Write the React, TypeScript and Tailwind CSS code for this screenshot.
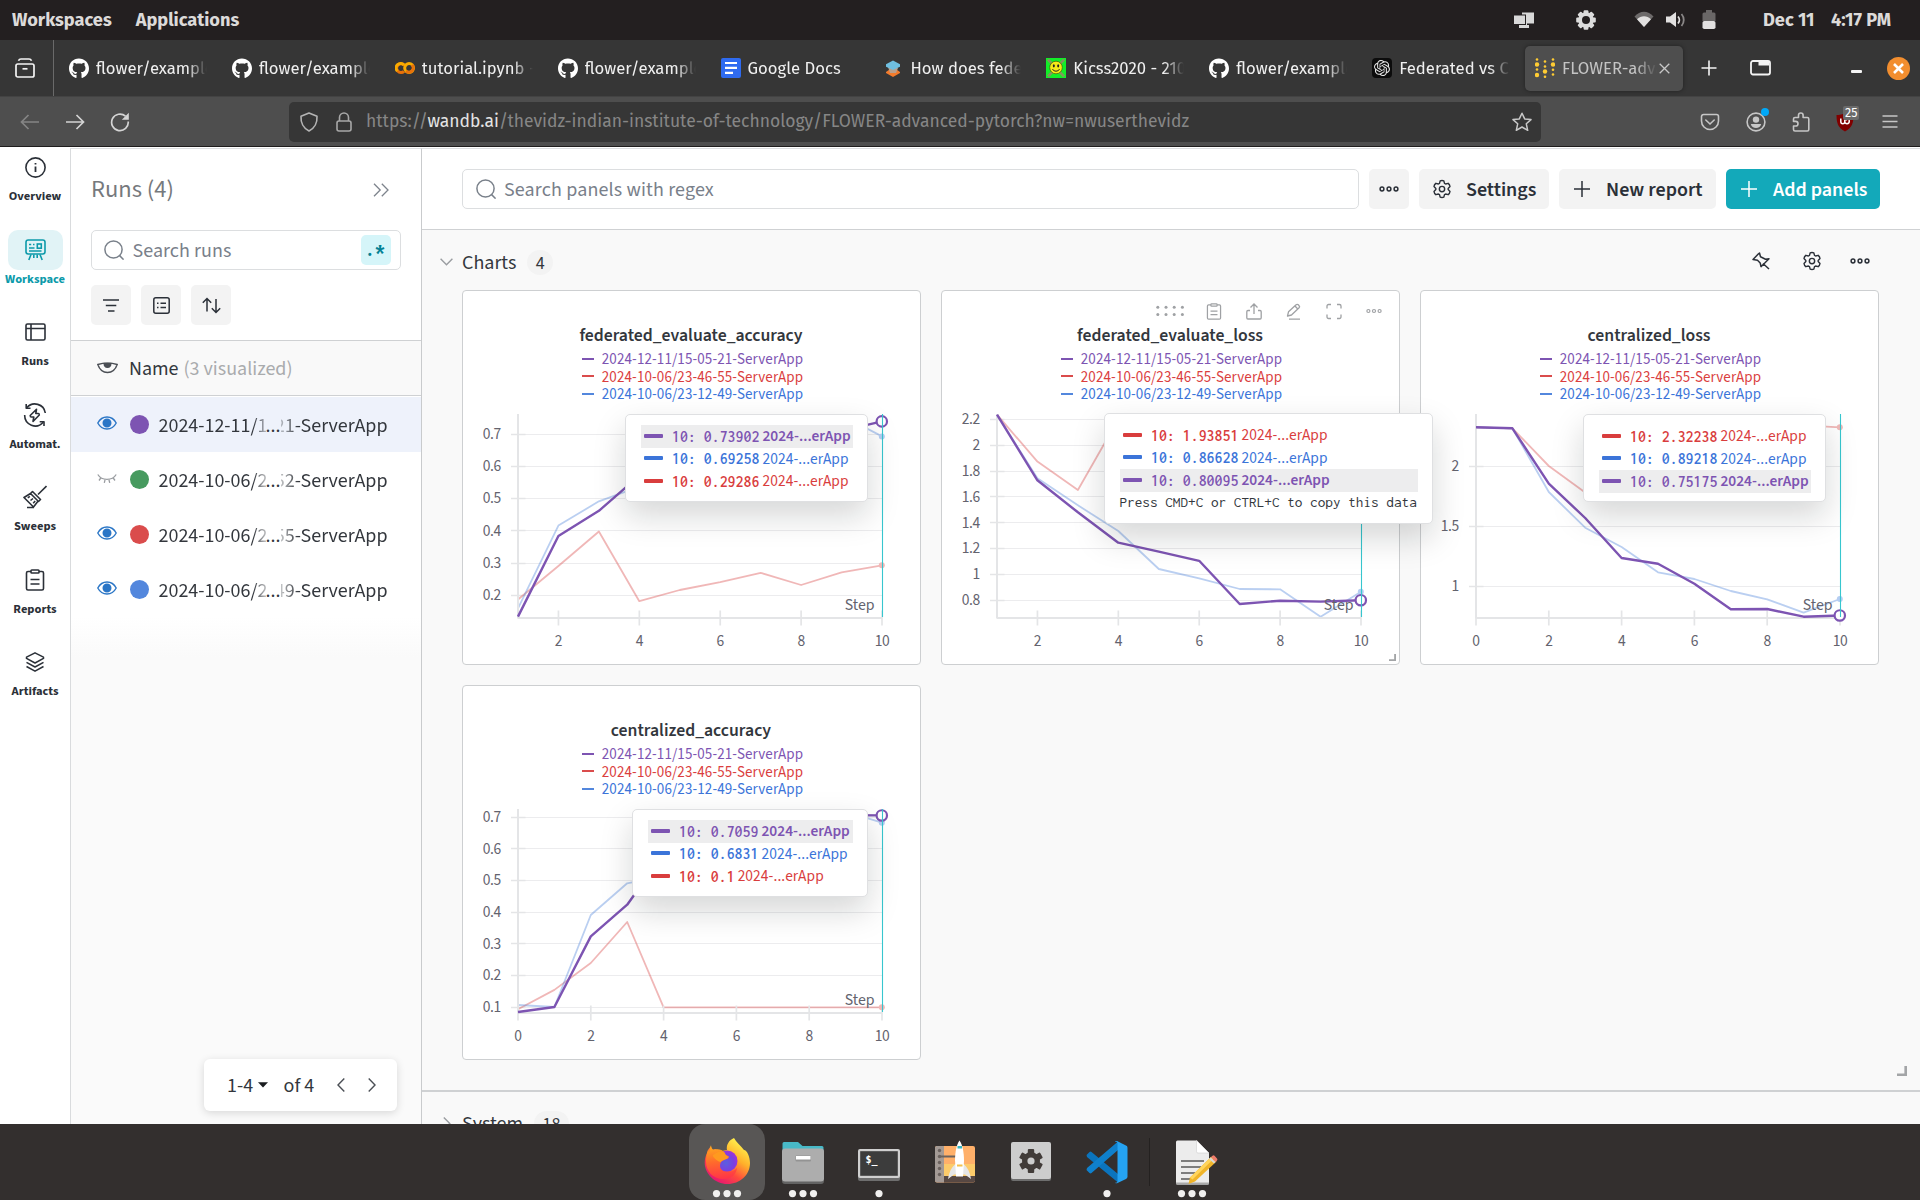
import React from "react";
import { FaGithub } from "react-icons/fa";
import { SiOpenai } from "react-icons/si";

const PURPLE = "#7d54b2";
const RED = "#da4c4c";
const BLUE = "#5387dd";

type IconProps = { className?: string };

/* ---------- Desktop top bar ---------- */

function TopBar() {
  return (
    <div className="flex h-10 shrink-0 items-center bg-[#231f20] px-3 text-[18.200px] font-bold text-[#dcdad9] [font-family:'Fira_Sans','Noto_Sans_CJK_SC',sans-serif]">
      <span className="pt-[2px]">Workspaces</span>
      <span className="ml-[24px] pt-[2px]">Applications</span>
      <div className="ml-auto flex items-center pr-[14px]">
        <svg className="h-5 w-5" viewBox="0 0 20 20" fill="none">
          <path d="M8 2.500h12v11H8z" fill="#d8d8d8" />
          <path d="M5 8h8v9.500H5z" fill="#d8d8d8" />
          <path d="M-1 4.500h13v10.500H-1z" fill="#231f20" />
          <path d="M0 5.500h11v8.500H0z" fill="#d8d8d8" />
          <path d="M5 15h10v3H5z" fill="#d8d8d8" />
        </svg>
        <svg className="ml-[42px] h-5 w-5" viewBox="-10 -10 20 20">
          <g fill="#dcdcdc">
            {[0, 45, 90, 135].map((a) => (
              <rect key={a} x="-2.400" y="-9.800" width="4.800" height="19.600" rx="1" transform={`rotate(${a})`} />
            ))}
            <circle r="7.800" />
          </g>
          <circle r="4" fill="#231f20" />
        </svg>
        <svg className="ml-[38px] h-5 w-5" viewBox="0 0 20 20">
          <path d="M.5 6.500C6 .2 14 .2 19.500 6.500L10 17z" fill="#6d6a6a" />
          <path d="M3 9.300C7 5.200 13 5.200 17 9.300L10 17z" fill="#e2e0e0" />
        </svg>
        <svg className="ml-[12px] h-5 w-5" viewBox="0 0 20 20" fill="none">
          <path d="M0 6.500h4L10 2v15l-6-4.500H0z" fill="#e2e0e0" />
          <path d="M12 6.500c1.800 2 1.800 5 0 7" stroke="#e2e0e0" strokeWidth="1.800" />
          <path d="M15.500 4c3 3.500 3 8.500 0 12" stroke="#8a8787" strokeWidth="1.800" />
        </svg>
        <svg className="ml-[13px] h-5 w-5" viewBox="0 0 20 20">
          <path d="M7 0h6v2.500h2a1.500 1.500 0 0 1 1.500 1.500v7h-13V4A1.500 1.500 0 0 1 5 2.500h2z" fill="#6a6767" />
          <rect x="3.500" y="11" width="13" height="8" rx="1.800" fill="#e2e0e0" />
        </svg>
        <span className="ml-[44px] w-[54px] pt-[2px] whitespace-nowrap">Dec 11</span>
        <span className="ml-[14px] w-[63px] pt-[2px] whitespace-nowrap">4:17 PM</span>
      </div>
    </div>
  );
}

/* ---------- Browser tabs ---------- */

const colabIcon = (
  <svg className="h-5 w-5" viewBox="0 0 20 20" fill="none" strokeWidth="3">
    <path d="M9.400 7.300A4.400 4.400 0 1 0 9 13.300" stroke="#e8710a" />
    <path d="M2.300 13A4.400 4.400 0 0 1 9 6.900" stroke="#f9ab00" />
    <circle cx="14.100" cy="10" r="4.400" stroke="#f9ab00" />
    <path d="M11 13.100a4.400 4.400 0 0 0 6.200-6.200" stroke="#e8710a" />
  </svg>
);

const docsIcon = (
  <svg className="h-5 w-5" viewBox="0 0 20 20">
    <rect width="20" height="20" rx="2" fill="#2f6bf0" />
    <path d="M4 5h12M4 9.800h12M4 14.800h8" stroke="#fff" strokeWidth="2.200" />
  </svg>
);

const stackIcon = (
  <svg className="h-5 w-5" viewBox="0 0 20 20">
    <path d="M3 14l7-5 7 5v1l-7 4-7-4z" fill="#f37b2c" />
    <path d="M5 9l10 1-2 5H7z" fill="#b9a08c" />
    <path d="M10 2.500l7 3.700v2.600L10 12 3 8.800V6.200z" fill="#6fbfe0" />
  </svg>
);

const skullIcon = (
  <svg className="h-5 w-5" viewBox="0 0 20 20">
    <rect width="20" height="20" fill="#12ee28" />
    <path d="M2 1.500l16 17M18 1.500l-16 17" stroke="#7f9a5a" strokeWidth="2.600" />
    <circle cx="10" cy="9.500" r="6.300" fill="#f4ea18" stroke="#3c3a05" strokeWidth=".6" />
    <ellipse cx="7.800" cy="7.800" rx="1" ry="1.600" fill="#222" />
    <ellipse cx="12.200" cy="7.800" rx="1" ry="1.600" fill="#222" />
    <path d="M6.500 11.200c1.500 2.600 5.500 2.600 7 0" stroke="#222" strokeWidth="1" fill="none" />
  </svg>
);

const wandbIcon = (
  <svg className="h-5 w-5" viewBox="0 0 20 20" fill="#ffcc33">
    <circle cx="2" cy="1.500" r="1.300" />
    <circle cx="2" cy="6.500" r="2.200" />
    <circle cx="2" cy="11.500" r="1.300" />
    <circle cx="2" cy="17" r="2.200" />
    <circle cx="10" cy="3.500" r="1.300" />
    <circle cx="10" cy="8.500" r="1.300" />
    <circle cx="10" cy="13.500" r="2.200" />
    <circle cx="10" cy="18.700" r="1.300" />
    <circle cx="18" cy="1.500" r="1.300" />
    <circle cx="18" cy="6.500" r="2.200" />
    <circle cx="18" cy="11.700" r="1.300" />
    <circle cx="18" cy="16.500" r="1.300" />
  </svg>
);

const githubIcon = <FaGithub className="h-[21px] w-5 text-white" />;

const tabs = [
  { icon: githubIcon, title: "flower/examples" },
  { icon: githubIcon, title: "flower/examples" },
  { icon: colabIcon, title: "tutorial.ipynb - Colab" },
  { icon: githubIcon, title: "flower/examples" },
  { icon: docsIcon, title: "Google Docs" },
  { icon: stackIcon, title: "How does federated" },
  { icon: skullIcon, title: "Kicss2020 - 2106" },
  { icon: githubIcon, title: "flower/examples" },
  {
    icon: (
      <span className="flex h-5 w-5 items-center justify-center rounded-[4px] bg-[#0c0c0c]">
        <SiOpenai className="h-4 w-4 text-[#e8e8e8]" />
      </span>
    ),
    title: "Federated vs Ce",
  },
];

function TabBar() {
  return (
    <div className="flex h-14 shrink-0 items-center bg-[#363636] text-[16.700px] text-[#f0f0f0] [font-family:'Fira_Sans','Noto_Sans_CJK_SC',sans-serif]">
      <div className="flex h-full w-[54px] items-center border-r border-[#6a6a6a] pl-[15px]">
        <svg className="h-5 w-5" viewBox="0 0 20 20" fill="none" stroke="#f4f4f4" strokeWidth="1.700">
          <rect x="1" y="6" width="18" height="13" rx="1.800" />
          <path d="M3.500 2.800C4 1.500 5 1 6 1h8c1 0 2 .5 2.500 1.800" />
          <path d="M7.500 10.800h5" />
        </svg>
      </div>
      <div className="ml-[5px] flex h-[45px] gap-[4.900px]">
        {tabs.map((t, i) => (
          <div key={i} className="flex w-[158px] items-center px-[10px]">
            <span className="shrink-0">{t.icon}</span>
            <span className="ml-[7px] flex-1 overflow-hidden pt-[2px] whitespace-nowrap [mask-image:linear-gradient(to_right,black_82%,transparent_100%)]">
              {t.title}
            </span>
          </div>
        ))}
        <div className="flex w-[158px] items-center rounded-[5px] bg-[#4e4e4e] pr-[13px] pl-[10px] text-[#c4c4c4] shadow-[0_0_4px_rgba(0,0,0,0.4)]">
          <span className="shrink-0">{wandbIcon}</span>
          <span className="ml-[7px] w-[95px] overflow-hidden pt-[2px] whitespace-nowrap [mask-image:linear-gradient(to_right,black_78%,transparent_100%)]">
            FLOWER-advanced
          </span>
          <svg className="ml-auto h-[11px] w-[11px] shrink-0" viewBox="0 0 11 11" stroke="#c8c8c8" strokeWidth="1.300">
            <path d="M.7.7l9.600 9.600M10.300.7L.7 10.300" />
          </svg>
        </div>
      </div>
      <svg className="ml-[18px] h-4 w-4" viewBox="0 0 16 16" stroke="#f4f4f4" strokeWidth="1.600">
        <path d="M8 .5v15M.5 8h15" />
      </svg>
      <svg className="ml-[33px] h-5 w-[21px]" viewBox="0 0 21 20" fill="none">
        <rect x="1" y="3" width="19" height="13.500" rx="2" stroke="#f4f4f4" strokeWidth="1.800" />
        <path d="M8.500 3H19v4.500H8.500z" fill="#f4f4f4" />
      </svg>
      <div className="ml-[80px] mt-[7px] h-[3px] w-[11px] rounded-[1px] bg-[#f4f4f4]" />
      <div className="ml-[25px] flex h-[23px] w-[23px] items-center justify-center rounded-full bg-[#f28e2f]">
        <svg className="h-[11px] w-[11px]" viewBox="0 0 11 11" stroke="#fff" strokeWidth="2.600">
          <path d="M1 1l9 9M10 1l-9 9" />
        </svg>
      </div>
    </div>
  );
}

/* ---------- Browser address bar ---------- */

function NavBar() {
  return (
    <div className="flex h-[51px] shrink-0 items-center border-t border-b border-t-[#434343] border-b-[#1f1d1d] bg-[#4e4e4e] text-[17.500px] [font-family:'Fira_Sans','Noto_Sans_CJK_SC',sans-serif]">
      <svg className="ml-5 h-5 w-5" viewBox="0 0 20 20" fill="none" stroke="#858585" strokeWidth="1.700">
        <path d="M19 10H1.500M8.500 3l-7 7 7 7" />
      </svg>
      <svg className="ml-[25px] h-5 w-5" viewBox="0 0 20 20" fill="none" stroke="#d4d4d4" strokeWidth="1.700">
        <path d="M1 10h17.500M11.500 3l7 7-7 7" />
      </svg>
      <svg className="ml-[25px] h-5 w-5" viewBox="0 0 20 20" fill="none" stroke="#d4d4d4" strokeWidth="1.700">
        <path d="M18.200 9.500A8.300 8.300 0 1 1 15.500 4.200" />
        <path d="M18.800.8v7h-7z" fill="#d4d4d4" stroke="none" />
      </svg>
      <div className="ml-[159px] flex h-10 w-[1252px] items-center rounded-[5px] bg-[#363636]">
        <svg className="ml-[10px] h-5 w-5" viewBox="0 0 20 20" fill="none" stroke="#b4b4b4" strokeWidth="1.600" strokeLinejoin="round">
          <path d="M10 1l8 3.300c.4 6-2.300 12-8 14.700C4.300 16.300 1.600 10.300 2 4.300z" />
        </svg>
        <svg className="ml-[15px] h-5 w-5" viewBox="0 0 20 20" fill="none" stroke="#a8a8a8" strokeWidth="1.600">
          <rect x="3" y="9" width="14" height="10" rx="2" />
          <path d="M5.500 9V5.500a4.500 4.500 0 0 1 9 0V9" />
        </svg>
        <span className="ml-3 pt-[2px] whitespace-nowrap text-[#868686]">
          https://<span className="text-[#e4e4e4]">wandb.ai</span>
          /thevidz-indian-institute-of-technology/FLOWER-advanced-pytorch?nw=nwuserthevidz
        </span>
        <svg className="mr-[9px] ml-auto h-5 w-5" viewBox="0 0 20 20" fill="none" stroke="#c9c9c9" strokeWidth="1.500" strokeLinejoin="round">
          <path d="M10 1.200l2.700 5.700 6.300.7-4.700 4.200 1.400 6.500-5.700-3.300-5.700 3.300 1.400-6.500L1 7.600l6.300-.7z" />
        </svg>
      </div>
      <svg className="ml-[159px] h-5 w-5" viewBox="0 0 20 20" fill="none" stroke="#c6c6c6" strokeWidth="1.600">
        <path d="M1.500 4.500a2 2 0 0 1 2-2h13a2 2 0 0 1 2 2V9a8.500 8.500 0 0 1-17 0z" />
        <path d="M5.800 8l4.200 4 4.200-4" strokeLinecap="round" />
      </svg>
      <div className="relative ml-[26px] h-5 w-5">
        <svg className="h-5 w-5" viewBox="0 0 20 20" fill="#c6c6c6">
          <circle cx="10" cy="10" r="8.900" fill="none" stroke="#c6c6c6" strokeWidth="1.600" />
          <circle cx="10" cy="7.600" r="3.200" />
          <path d="M4.800 12h10.400c-.5 2.600-2.600 4-5.200 4s-4.700-1.400-5.200-4z" />
        </svg>
        <span className="absolute -top-[4px] left-[15px] h-2 w-2 rounded-full bg-[#00a8f8]" />
      </div>
      <svg className="ml-[25px] h-5 w-5" viewBox="0 0 20 20" fill="none" stroke="#c6c6c6" strokeWidth="1.600" strokeLinejoin="round">
        <path d="M2.500 7a1.500 1.500 0 0 1 1.500-1.500h3.500V3.300a2.300 2.300 0 0 1 4.600 0v2.200h4.200a1.500 1.500 0 0 1 1.500 1.500v10.500a1.500 1.500 0 0 1-1.500 1.500H4a1.500 1.500 0 0 1-1.500-1.500V14h2.200a2.300 2.300 0 0 0 0-4.600H2.500z" />
      </svg>
      <div className="relative ml-[24px] h-5 w-5">
        <svg className="h-5 w-5" viewBox="0 0 20 20">
          <path d="M10 1c2.500 1.500 5.500 2 8.500 2 0 8-1.500 13-8.500 16.500C3 16 1.500 11 1.500 3c3 0 6-.5 8.500-2z" fill="#800000" />
          <path d="M5.800 6.500v3c0 3 4 3 4 0v-2m0 2c0 3 4.500 3 4.500-.5 0-2.500-3-2.500-3-.5" stroke="#fff" strokeWidth="1.500" fill="none" />
        </svg>
        <span className="absolute -top-[6px] left-[8px] rounded-[2px] bg-[#6b6b6b] px-[2px] text-[12.500px] leading-[14px] text-white">25</span>
      </div>
      <svg className="ml-[25px] h-5 w-5" viewBox="0 0 20 20" stroke="#c6c6c6" strokeWidth="1.600">
        <path d="M2.500 4h15M2.500 9.500h15M2.500 15h15" />
      </svg>
    </div>
  );
}

/* ---------- Shared icons ---------- */

function GearIcon({ className }: IconProps) {
  return (
    <svg className={className} viewBox="0 0 24 24" fill="none" stroke="currentColor" strokeWidth="1.700" strokeLinejoin="round">
      <circle cx="12" cy="12" r="3.200" />
      <path d="M9.800 2.200Q12 1.200 14.200 2.200L15 5.300L16.300 6L19.400 5.200Q21.300 6.600 21.600 9L19.400 11.300V12.700L21.600 15Q21.300 17.400 19.400 18.800L16.300 18L15 18.700L14.200 21.800Q12 22.800 9.800 21.800L9 18.700L7.700 18L4.600 18.800Q2.700 17.400 2.400 15L4.600 12.700V11.300L2.400 9Q2.700 6.600 4.600 5.200L7.700 6L9 5.300Z" />
    </svg>
  );
}

function DotsIcon({ className }: IconProps) {
  return (
    <svg className={className} viewBox="0 0 20 20" fill="none" stroke="currentColor" strokeWidth="1.500">
      <circle cx="3" cy="10" r="1.900" />
      <circle cx="10" cy="10" r="1.900" />
      <circle cx="17" cy="10" r="1.900" />
    </svg>
  );
}

function SearchIcon({ className }: IconProps) {
  return (
    <svg className={className} viewBox="0 0 20 20" fill="none" stroke="currentColor" strokeWidth="1.500">
      <circle cx="9.500" cy="9.500" r="8.600" />
      <path d="M15.600 15.600l4 4" />
    </svg>
  );
}

function PlusIcon({ className }: IconProps) {
  return (
    <svg className={className} viewBox="0 0 16 16" stroke="currentColor" strokeWidth="1.500">
      <path d="M8 0v16M0 8h16" />
    </svg>
  );
}

function ClipboardIcon({ className }: IconProps) {
  return (
    <svg className={className} viewBox="0 0 20 22" fill="none" stroke="currentColor" strokeWidth="1.600">
      <path d="M6 2.500H3A1.500 1.500 0 0 0 1.500 4v15.500A1.500 1.500 0 0 0 3 21h14a1.500 1.500 0 0 0 1.500-1.500V4A1.500 1.500 0 0 0 17 2.500h-3" />
      <rect x="6" y="1" width="8" height="3" rx=".8" />
      <path d="M5.500 10.500h9M5.500 15h9" />
    </svg>
  );
}

/* ---------- Left rail ---------- */

const rail: { label: string; active?: boolean; icon: React.ReactNode }[] = [
  {
    label: "Overview",
    icon: (
      <svg className="h-[21px] w-[21px]" viewBox="0 0 21 21" fill="none" stroke="currentColor" strokeWidth="1.600">
        <circle cx="10.500" cy="10.500" r="9.600" />
        <path d="M10.500 9.500v5.500M10.500 5.900v1.700" strokeWidth="1.800" />
      </svg>
    ),
  },
  {
    label: "Workspace",
    active: true,
    icon: (
      <svg className="h-[22px] w-[21px]" viewBox="0 0 21 22" fill="none" stroke="currentColor" strokeWidth="1.600">
        <rect x="1" y="1" width="19" height="14" rx="2.200" />
        <rect x="12.300" y="5" width="4" height="4.200" />
        <path d="M4 5.500h2.200M4 9h5.500M4 12h12.500M8 5.500h1.500" strokeWidth="1.300" />
        <path d="M6 15.500L3.800 21M15 15.500l2.200 5.500M8.800 15.500V19M12.200 15.500V19" />
      </svg>
    ),
  },
  {
    label: "Runs",
    icon: (
      <svg className="h-[18px] w-[21px]" viewBox="0 0 21 18" fill="none" stroke="currentColor" strokeWidth="1.600">
        <rect x="1" y="1" width="19" height="16" rx="1.500" />
        <path d="M1 5.500h19M6 1v16" />
      </svg>
    ),
  },
  {
    label: "Automat.",
    icon: (
      <svg className="h-[24px] w-[24px]" viewBox="0 0 24 24" fill="none" stroke="currentColor" strokeWidth="1.600" strokeLinejoin="round">
        <path d="M3.800 4.800A10.500 10.500 0 0 1 22.300 10M1.700 12a10.500 10.500 0 0 0 18.500 7.200" />
        <path d="M3.200 1v4.300h4.300M21 23v-4.300h-4.300" />
        <path d="M13.500 6.300L7.200 12.500c0 1 .3 1.500 1 1.500h2.600l-.8 4.500 6.300-6.500c0-1-.4-1.500-1-1.500h-2.500z" />
      </svg>
    ),
  },
  {
    label: "Sweeps",
    icon: (
      <svg className="h-[24px] w-[24px]" viewBox="0 0 24 24" fill="none" stroke="currentColor" strokeWidth="1.600" strokeLinejoin="round">
        <path d="M23.500 1L15 9.500" />
        <path d="M9.500 6.500l8 8-2 2-8-8zM7.500 8.500L1 12.500l9.500 9.500 5-6.500M4.800 12.800l2-1.500M7.500 15.500l2.500-2M10.200 18.200l2-2.200M4 22.500h7" />
      </svg>
    ),
  },
  { label: "Reports", icon: <ClipboardIcon className="h-[22px] w-5" /> },
  {
    label: "Artifacts",
    icon: (
      <svg className="h-5 w-5" viewBox="0 0 20 20" fill="none" stroke="currentColor" strokeWidth="1.500" strokeLinejoin="round">
        <path d="M10 .8l8.500 4.400v1.200L10 11 1.500 6.400V5.200z" />
        <path d="M1.500 10.300L10 15l8.500-4.700M1.500 14.500L10 19.200l8.500-4.700" />
      </svg>
    ),
  },
];

function Rail() {
  return (
    <nav className="-mt-px flex w-[70px] shrink-0 flex-col items-center">
      {rail.map((r) => (
        <div key={r.label} className={"flex h-[82.500px] shrink-0 flex-col items-center " + (r.active ? "text-[#0c9aaa]" : "text-[#2b3038]")}>
          <span className={"flex h-10 w-[55px] items-center justify-center rounded-[10px] " + (r.active ? "bg-[#e1f3f6]" : "")}>
            {r.icon}
          </span>
          <span className="text-[12.500px] leading-[18px] font-bold">{r.label}</span>
        </div>
      ))}
    </nav>
  );
}

/* ---------- Runs panel ---------- */

function OpenEye() {
  return (
    <svg className="mb-[3px] h-4 w-5 shrink-0" viewBox="0 0 20 16" fill="none" stroke="#2b76c6" strokeWidth="1.400">
      <path d="M.8 8C5 0 15 0 19.200 8 15 16 5 16 .8 8z" />
      <circle cx="10" cy="8" r="3.800" fill="#2b76c6" stroke="#2b76c6" />
    </svg>
  );
}

function ClosedEye() {
  return (
    <svg className="mb-[3px] h-4 w-5 shrink-0" viewBox="0 0 20 16" fill="none" stroke="#9a9da1" strokeWidth="1.300">
      <path d="M.8 4.500c4 6.500 14.400 6.500 18.400 0M3.800 8L2 10.500M8 9.800l-.7 3M12 9.800l.7 3M16.200 8l1.800 2.500" />
    </svg>
  );
}

const runs = [
  { head: "2024-12-11/1", tail: "21-ServerApp", color: "bg-[#7d54b2]", visible: true, active: true },
  { head: "2024-10-06/2", tail: "52-ServerApp", color: "bg-[#479a5f]", visible: false },
  { head: "2024-10-06/2", tail: "55-ServerApp", color: "bg-[#da4c4c]", visible: true },
  { head: "2024-10-06/2", tail: "49-ServerApp", color: "bg-[#5387dd]", visible: true },
];

function RunsPanel() {
  return (
    <aside className="relative flex w-[352px] shrink-0 flex-col border-t border-r border-l border-t-[#dcdee0] border-r-[#c9cbcd] border-l-[#d9dbdd] bg-[#fafafa]">
      <div className="bg-white px-5 pb-[15px]">
        <div className="flex h-[81px] items-center justify-between pr-[12px]">
          <span className="pt-[2px] text-[24.500px] text-[#76797d]">Runs (4)</span>
          <svg className="h-[14px] w-4" viewBox="0 0 16 14" fill="none" stroke="#7d838c" strokeWidth="1.300">
            <path d="M1 .8L7.200 7 1 13.200M8.800.8L15 7l-6.200 6.200" />
          </svg>
        </div>
        <div className="flex h-10 w-[310px] items-center rounded-[5px] border border-[#dcdee0] pr-[9px] pl-[12px] text-[#79808a]">
          <SearchIcon className="h-5 w-5" />
          <span className="ml-[8.500px] pt-[2px] text-[20px] tracking-[0.050px]">Search runs</span>
          <span className="ml-auto flex h-[30px] w-[30px] items-center justify-center rounded-[5px] bg-[#d5f5f9] pr-[2px] text-[20px] font-bold text-[#038194] [font-family:'Inconsolata','Liberation_Mono',monospace]">
            .*
          </span>
        </div>
        <div className="mt-[15px] flex gap-[10px] text-[#2b3038]">
          <span className="flex h-10 w-10 items-center justify-center rounded-[5px] bg-[#f3f3f3]">
            <svg className="h-4 w-4" viewBox="0 0 16 16" stroke="currentColor" strokeWidth="1.500">
              <path d="M0 3h16M2.800 8.500h10.500M5 14h6.500" />
            </svg>
          </span>
          <span className="flex h-10 w-10 items-center justify-center rounded-[5px] bg-[#f3f3f3]">
            <svg className="h-[17px] w-[17px]" viewBox="0 0 17 17" fill="none" stroke="currentColor" strokeWidth="1.500">
              <rect x=".8" y=".8" width="15.400" height="15.400" rx="2" />
              <path d="M4 6.200h1.500M7.500 6.200H13M4 10.600h1.500M7.500 10.600H13" />
            </svg>
          </span>
          <span className="flex h-10 w-10 items-center justify-center rounded-[5px] bg-[#f3f3f3]">
            <svg className="h-[17px] w-[19px]" viewBox="0 0 19 17" fill="none" stroke="currentColor" strokeWidth="1.500">
              <path d="M5 14.500V1.500M.8 5.800L5 1.500l4.200 4.300M14 2v13.500M9.800 11.200l4.200 4.300 4.200-4.300" />
            </svg>
          </span>
        </div>
      </div>
      <div className="flex h-[56px] items-center border-t border-b border-[#cfd1d3] bg-[#f9f9f9] pl-[26px] text-[20px]">
        <svg className="h-3 w-[21px]" viewBox="0 0 21 12" fill="none" stroke="#4b4f55" strokeWidth="1.400">
          <path d="M.8 2.500Q10.500-.3 20.200 2.500Q17.500 10.500 10.500 10.500T.8 2.500z" />
          <path d="M7.200 1.500h6.600c0 5-6.600 5-6.600 0z" fill="#4b4f55" />
        </svg>
        <span className="ml-[11px] pt-[2px] text-[#33373d]">Name</span>
        <span className="ml-[5px] pt-[2px] text-[#a9abad]">(3 visualized)</span>
      </div>
      <div className="bg-white pt-[1px]">
        {runs.map((r) => (
          <div key={r.tail} className={"flex h-[55px] items-center pl-[26px] text-[20px] text-[#33373d] " + (r.active ? "bg-[#eef2fb]" : "")}>
            {r.visible ? <OpenEye /> : <ClosedEye />}
            <span className={"ml-[12.500px] h-[19.500px] w-[19.500px] rounded-full " + r.color} />
            <div className="ml-[9.500px] flex w-[229px] pt-[2px] whitespace-nowrap">
              <span className="w-[107px] overflow-hidden [mask-image:linear-gradient(to_right,black_88%,rgba(0,0,0,0.3)_100%)]">{r.head}</span>
              <span className="w-[15px]">...</span>
              <span className="flex w-[107px] justify-end overflow-hidden [mask-image:linear-gradient(to_right,rgba(0,0,0,0.3)_0%,black_16%)]">
                <span>{r.tail}</span>
              </span>
            </div>
          </div>
        ))}
      </div>
      <div className="h-[40px] shrink-0 bg-gradient-to-b from-white to-[#fafafa]" />
      <div className="absolute right-[24px] bottom-[13px] flex h-[52px] w-[193px] items-center rounded-[6px] bg-white pl-[23px] text-[20px] text-[#33373d] shadow-[0_2px_8px_rgba(0,0,0,0.14)]">
        <span className="pt-[2px]">1-4</span>
        <svg className="ml-[5px] h-[6px] w-[10px]" viewBox="0 0 10 6" fill="#1a1c1f">
          <path d="M0 .3h10L5 5.500z" />
        </svg>
        <span className="ml-[15.500px] pt-[2px]">of 4</span>
        <svg className="ml-[22.500px] h-[14px] w-2" viewBox="0 0 8 14" fill="none" stroke="#4b4f55" strokeWidth="1.400">
          <path d="M7.300.6L1 7l6.300 6.400" />
        </svg>
        <svg className="ml-[23px] h-[14px] w-2" viewBox="0 0 8 14" fill="none" stroke="#4b4f55" strokeWidth="1.400">
          <path d="M.7.6L7 7 .7 13.400" />
        </svg>
      </div>
    </aside>
  );
}

/* ---------- Charts ---------- */

type Series = [number, number][];
type TipRow = { c: "p" | "r" | "b"; text: string; on?: boolean };
type Chart = {
  title: string;
  xMin: number;
  yTicks: string[];
  yRef: [number, number];
  perUnit: number;
  purple: Series;
  blue: Series;
  red: Series;
  rows: TipRow[];
  tipClass: string;
  note?: boolean;
  hovered?: boolean;
};

const from = (start: number, ys: number[]): Series => ys.map((y, i) => [start + i, y]);

const charts: Chart[] = [
  {
    title: "federated_evaluate_accuracy",
    xMin: 1,
    yTicks: ["0.7", "0.6", "0.5", "0.4", "0.3", "0.2"],
    yRef: [0.7, 144],
    perUnit: 322.7,
    purple: from(1, [0.134, 0.384, 0.462, 0.571, 0.61, 0.64, 0.67, 0.69, 0.71, 0.739]),
    blue: from(1, [0.16, 0.416, 0.4915, 0.537, 0.58, 0.62, 0.65, 0.69, 0.758, 0.6926]),
    red: from(1, [0.187, 0.291, 0.398, 0.182, 0.2165, 0.241, 0.27, 0.232, 0.271, 0.2929]),
    rows: [
      { c: "p", text: "10: 0.73902", on: true },
      { c: "b", text: "10: 0.69258" },
      { c: "r", text: "10: 0.29286" },
    ],
    tipClass: "right-[52px] top-[123px] h-[88px] w-[243px]",
  },
  {
    title: "federated_evaluate_loss",
    xMin: 1,
    yTicks: ["2.2", "2", "1.8", "1.6", "1.4", "1.2", "1", "0.8"],
    yRef: [2.2, 129.3],
    perUnit: 129.3,
    purple: from(1, [2.236, 1.728, 1.4805, 1.2457, 1.176, 1.106, 0.7716, 0.797, 0.79, 0.801]),
    blue: from(1, [2.236, 1.744, 1.535, 1.336, 1.042, 0.97, 0.8875, 0.885, 0.6735, 0.866]),
    red: from(1, [2.236, 1.8727, 1.6535, 2.2, 2.1, 2.0, 2.0, 2.0, 1.95, 1.9385]),
    rows: [
      { c: "r", text: "10: 1.93851" },
      { c: "b", text: "10: 0.86628" },
      { c: "p", text: "10: 0.80095", on: true },
    ],
    tipClass: "left-[162px] top-[122px] h-[111px] w-[329px]",
    note: true,
    hovered: true,
  },
  {
    title: "centralized_loss",
    xMin: 0,
    yTicks: ["2", "1.5", "1"],
    yRef: [2, 176],
    perUnit: 120,
    purple: from(0, [2.3225, 2.314, 1.8527, 1.567, 1.2333, 1.186, 1.019, 0.8055, 0.808, 0.744, 0.7545]),
    blue: from(0, [2.3225, 2.314, 1.783, 1.486, 1.325, 1.114, 1.058, 0.958, 0.889, 0.778, 0.892]),
    red: from(0, [2.3225, 2.314, 2.0, 1.778, 1.9, 2.0, 2.05, 2.1, 2.2, 2.338, 2.3224]),
    rows: [
      { c: "r", text: "10: 2.32238" },
      { c: "b", text: "10: 0.89218" },
      { c: "p", text: "10: 0.75175", on: true },
    ],
    tipClass: "right-[52px] top-[123px] h-[88px] w-[243px]",
  },
  {
    title: "centralized_accuracy",
    xMin: 0,
    yTicks: ["0.7", "0.6", "0.5", "0.4", "0.3", "0.2", "0.1"],
    yRef: [0.7, 132.3],
    perUnit: 316.7,
    purple: from(0, [0.0853, 0.101, 0.324, 0.424, 0.585, 0.62, 0.65, 0.68, 0.69, 0.707, 0.7059]),
    blue: from(0, [0.1074, 0.101, 0.3916, 0.4916, 0.515, 0.58, 0.62, 0.65, 0.68, 0.718, 0.6831]),
    red: from(0, [0.094, 0.155, 0.24, 0.3695, 0.1, 0.1, 0.1, 0.1, 0.1, 0.1, 0.1]),
    rows: [
      { c: "p", text: "10: 0.7059", on: true },
      { c: "b", text: "10: 0.6831" },
      { c: "r", text: "10: 0.1" },
    ],
    tipClass: "right-[52px] top-[123px] h-[88px] w-[236px]",
  },
];

const TOP = 124;
const BOTTOM = 327.5;
const LEFT = 56;
const RIGHT = 420;

function Plot({ chart }: { chart: Chart }) {
  const px = (x: number) => LEFT + ((x - chart.xMin) / (10 - chart.xMin)) * (RIGHT - LEFT);
  const py = (y: number) => chart.yRef[1] + (chart.yRef[0] - y) * chart.perUnit;
  const line = (s: Series) => s.map(([x, y]) => `${px(x).toFixed(1)},${py(y).toFixed(1)}`).join(" ");
  const end = (s: Series) => s[s.length - 1][1];
  const xTicks = chart.xMin === 0 ? [0, 2, 4, 6, 8, 10] : [2, 4, 6, 8, 10];
  return (
    <svg className="h-[261px] w-[457px] text-[15.500px] [font-family:'Source_Sans_3','Noto_Sans_CJK_SC',sans-serif]" viewBox="1 113 457 261" fill="none">
      <g stroke="#ececee" strokeWidth="1.200">
        {chart.yTicks.map((t) => (
          <path key={t} d={`M49 ${Math.floor(py(+t)) + 0.5}H${RIGHT}`} />
        ))}
      </g>
      <g stroke="#e4e5e7">
        {chart.yTicks.map((t) => (
          <path key={t} d={`M49 ${Math.floor(py(+t)) + 0.5}h14.500`} strokeWidth="1.500" />
        ))}
      </g>
      <g fill="#63636e">
        <svg x="21" y="113" width="40" height="261" viewBox="21 113 40 261">
          {chart.yTicks.map((t) => (
            <text key={t} x="38.800" y={py(+t) + 4.800} textAnchor="end" letterSpacing="-.4">
              {t}
            </text>
          ))}
        </svg>
        {xTicks.map((t) => (
          <text key={t} x={px(t)} y="355.800" textAnchor="middle" letterSpacing="-.4">
            {t}
          </text>
        ))}
      </g>
      <polyline points={line(chart.red)} stroke={RED} strokeOpacity=".4" strokeWidth="1.800" strokeLinejoin="round" />
      <polyline points={line(chart.blue)} stroke={BLUE} strokeOpacity=".4" strokeWidth="1.800" strokeLinejoin="round" />
      <g stroke="#e4e5e7" strokeWidth="2">
        <path d={`M${LEFT} ${TOP}V${BOTTOM + 1}M${LEFT} ${BOTTOM + 0.5}H${RIGHT}`} />
        {xTicks.map((t) => (
          <path key={t} d={`M${px(t)} 320.500v15`} strokeWidth="1.700" />
        ))}
      </g>
      <polyline points={line(chart.purple)} stroke={PURPLE} strokeWidth="2.400" strokeLinejoin="round" />
      <circle cx={RIGHT - 0.2} cy={py(end(chart.red))} r="3" fill="#f1b9b8" />
      <circle cx={RIGHT - 0.2} cy={py(end(chart.blue))} r="3" fill="#b5cdf2" />
      <text x="412.500" y="320" textAnchor="end" fill="#63636e" fontSize="15.800">
        Step
      </text>
      <circle cx={RIGHT - 0.2} cy={py(end(chart.purple))} r="5.200" fill="#fff" stroke={PURPLE} strokeWidth="2.200" />
      <path d={`M${RIGHT + 0.5} ${TOP}V${BOTTOM - 0.5}`} stroke="#37c6cf" strokeWidth="1.100" />
    </svg>
  );
}

const legend = [
  { text: "2024-12-11/15-05-21-ServerApp", cls: "text-[#7d54b2]", bar: "bg-[#7d54b2]" },
  { text: "2024-10-06/23-46-55-ServerApp", cls: "text-[#da3e3e]", bar: "bg-[#da4c4c]" },
  { text: "2024-10-06/23-12-49-ServerApp", cls: "text-[#3b74d9]", bar: "bg-[#5387dd]" },
];

const tipColor = {
  p: { text: "text-[#7d54b2]", bar: "bg-[#7d54b2]" },
  r: { text: "text-[#d93d3d]", bar: "bg-[#d93d3d]" },
  b: { text: "text-[#3b74d9]", bar: "bg-[#3b74d9]" },
};

function Tooltip({ chart }: { chart: Chart }) {
  return (
    <div className={"absolute rounded-[5px] border border-[#dfe0e2] bg-white px-[14.500px] pt-[10px] shadow-[0_14px_32px_rgba(14,16,20,0.17)] " + chart.tipClass}>
      {chart.rows.map((r) => (
        <div
          key={r.text}
          className={"flex h-[22.500px] items-center pl-[3px] whitespace-nowrap " + tipColor[r.c].text + (r.on ? " bg-[#ededee]" : "")}
        >
          <span className={"mb-[1px] h-[4px] w-[19px] rounded-[1px] " + tipColor[r.c].bar} />
          <span className="ml-[9.500px] pt-[1px] text-[15.900px] font-semibold whitespace-pre [font-family:'Inconsolata','Liberation_Mono',monospace]">{r.text}</span>
          <span className={"ml-[3px] pt-[1px] text-[15.400px] " + (r.on ? "font-semibold" : "tracking-[0.100px]")}>2024-...erApp</span>
        </div>
      ))}
      {chart.note && (
        <div className="text-[15.250px] leading-[21px] whitespace-nowrap text-[#33373d] [font-family:'Inconsolata','Liberation_Mono',monospace]">
          Press CMD+C or CTRL+C to copy this data
        </div>
      )}
    </div>
  );
}

function PanelActions() {
  return (
    <div className="absolute top-[10px] right-[17px] flex items-center text-[#9fa1a4]">
      <svg className="h-5 w-7" viewBox="0 0 28 20" fill="currentColor">
        {[0, 1, 2, 3].map((i) => (
          <g key={i}>
            <circle cx={1.800 + i * 8.200} cy="6.300" r="1.500" />
            <circle cx={1.800 + i * 8.200} cy="13.500" r="1.500" />
          </g>
        ))}
      </svg>
      <ClipboardIcon className="ml-[22px] h-[17px] w-[16px]" />
      <svg className="ml-[24px] h-[17px] w-[16px]" viewBox="0 0 16 17" fill="none" stroke="currentColor" strokeWidth="1.300">
        <path d="M4 7.500H2A1.200 1.200 0 0 0 .8 8.700v6A1.300 1.300 0 0 0 2 16h12a1.300 1.300 0 0 0 1.200-1.300v-6A1.200 1.200 0 0 0 14 7.500h-2M8 11V1M4.500 4.500L8 1l3.500 3.500" />
      </svg>
      <svg className="ml-[24px] h-[17px] w-[16px]" viewBox="0 0 16 17" fill="none" stroke="currentColor" strokeWidth="1.300" strokeLinejoin="round">
        <path d="M1.500 13l1-4.200 7.600-7a1.500 1.500 0 0 1 2.200 0l.8.900a1.500 1.500 0 0 1 0 2.100l-7.600 7.200zM9 3l3 3.200M3 16.200h11" />
      </svg>
      <svg className="ml-[24px] h-[17px] w-[16px]" viewBox="0 0 16 17" fill="none" stroke="currentColor" strokeWidth="1.300">
        <path d="M1 5.500V3a1.500 1.500 0 0 1 1.500-1.500H5M11 1.500h2.500A1.500 1.500 0 0 1 15 3v2.500M15 11.500V14a1.500 1.500 0 0 1-1.500 1.500H11M5 15.500H2.500A1.500 1.500 0 0 1 1 14v-2.500" />
      </svg>
      <DotsIcon className="ml-[24px] h-4 w-4" />
    </div>
  );
}

function CornerHandle({ className }: IconProps) {
  return (
    <svg className={className} viewBox="0 0 8 8" fill="none" stroke="#a3a5a7" strokeWidth="2.200">
      <path d="M7 0v7H0" />
    </svg>
  );
}

function ChartCard({ chart }: { chart: Chart }) {
  return (
    <section className={"relative h-[375px] rounded-[4px] border border-[#cdcfd1] bg-white " + (chart.hovered ? "z-10" : "")}>
      <h3 className="mt-[33px] h-[22px] pt-[1px] pr-[1px] text-center text-[17.700px] leading-[22px] font-semibold text-[#33373d]">{chart.title}</h3>
      <div className="mt-1 flex h-[53px] flex-col items-center">
        {legend.map((l) => (
          <div key={l.text} className={"flex h-[17.500px] items-center pl-[2px] text-[15px] leading-[17px] " + l.cls}>
            <span className={"mr-2 h-[2px] w-3 " + l.bar} />
            <span className="pt-[2px] tracking-[0.120px]">{l.text}</span>
          </div>
        ))}
      </div>
      <Plot chart={chart} />
      <Tooltip chart={chart} />
      {chart.hovered && (
        <>
          <PanelActions />
          <CornerHandle className="absolute right-[3px] bottom-[3px] h-[7px] w-[7px]" />
        </>
      )}
    </section>
  );
}

function Main() {
  const button = "flex h-10 items-center rounded-[5px] bg-[#f3f3f3] text-[20px] font-semibold text-[#2b3038]";
  return (
    <main className="flex min-w-0 flex-1 flex-col overflow-hidden border-t border-[#dcdee0] bg-[#f9f9f9]">
      <div className="flex h-[81px] shrink-0 items-center gap-[10px] border-b border-[#cfd1d3] bg-white px-10">
        <div className="flex h-10 flex-1 items-center rounded-[5px] border border-[#dcdee0] pl-[13px] text-[#79808a]">
          <SearchIcon className="h-5 w-5" />
          <span className="ml-2 pt-[2px] text-[20px] tracking-[0.150px]">Search panels with regex</span>
        </div>
        <div className={button + " w-10 justify-center pr-px"}>
          <DotsIcon className="h-5 w-5" />
        </div>
        <div className={button + " w-[130px] pl-[13px]"}>
          <GearIcon className="h-5 w-5" />
          <span className="ml-[14px] pt-[2px]">Settings</span>
        </div>
        <div className={button + " w-[157px] pl-[15px]"}>
          <PlusIcon className="h-4 w-4" />
          <span className="ml-4 pt-[2px]">New report</span>
        </div>
        <div className="flex h-10 w-[154px] items-center rounded-[5px] bg-[#13a9ba] pl-[15px] text-[20px] font-semibold text-white">
          <PlusIcon className="h-4 w-4" />
          <span className="ml-4 pt-[2px]">Add panels</span>
        </div>
      </div>
      <div className="relative h-[862px] shrink-0 border-b-2 border-[#cfd1d3]">
        <div className="flex h-[60px] items-center pt-[4px] pr-[50px] pl-[18px] text-[20px] text-[#33373d]">
          <svg className="h-2 w-[13px]" viewBox="0 0 13 8" fill="none" stroke="#9a9da1" strokeWidth="1.400">
            <path d="M.6.8l5.900 6 5.900-6" />
          </svg>
          <span className="ml-[9px] pt-[2px]">Charts</span>
          <span className="ml-[11px] flex h-[25px] w-[26px] items-center justify-center rounded-full bg-[#f3f3f3] pt-[2px] text-[18px]">4</span>
          <div className="mb-[2px] ml-auto flex items-center text-[#2b3038]">
            <svg className="h-[18px] w-[18px]" viewBox="0 0 18 18" fill="none" stroke="currentColor" strokeWidth="1.500" strokeLinejoin="round">
              <path d="M7.500 1l1 3.800 5 2.400 3.500-.4-4 4-4 3.800L8.200 11 5.500 8.300 1 7.500 6.500 1.800zM11 11.500l6 5.500" />
            </svg>
            <GearIcon className="ml-[32px] h-5 w-5" />
            <DotsIcon className="ml-[28px] h-5 w-5" />
          </div>
        </div>
        <div className="grid w-[1457px] grid-cols-3 gap-5 pl-10">
          {charts.map((c) => (
            <ChartCard key={c.title} chart={c} />
          ))}
        </div>
        <CornerHandle className="absolute right-[13px] bottom-[14px] h-[10px] w-[10px]" />
      </div>
      <div className="flex h-[62px] shrink-0 items-center pl-[21px] text-[20px] text-[#33373d]">
        <svg className="h-[13px] w-2" viewBox="0 0 8 13" fill="none" stroke="#9a9da1" strokeWidth="1.400">
          <path d="M.8.6l6 5.900-6 5.900" />
        </svg>
        <span className="ml-[11px] pt-[2px]">System</span>
        <span className="ml-[11px] flex h-[25px] w-[35px] items-center justify-center rounded-full bg-[#f3f3f3] pt-[2px] text-[18px]">18</span>
      </div>
    </main>
  );
}

/* ---------- Dock ---------- */

function DockItem({ dots, active, children }: { dots: number; active?: boolean; children: React.ReactNode }) {
  return (
    <svg className={"h-[76px] w-[76px] rounded-[16px] " + (active ? "bg-[#585655]" : "")} viewBox="0 0 76 76">
      {children}
      {Array.from({ length: dots }, (_, i) => (
        <circle key={i} cx={38 + (i - (dots - 1) / 2) * 10.5} cy="69.600" r="3.600" fill="#f1f0ef" />
      ))}
    </svg>
  );
}

function Dock() {
  return (
    <div className="flex h-[76px] shrink-0 bg-[#332f2e] pl-[689px]">
      <DockItem dots={3} active>
        <defs>
          <linearGradient id="ffBody" x1=".85" y1=".1" x2=".25" y2="1">
            <stop offset="0" stopColor="#fff44f" />
            <stop offset=".35" stopColor="#ffb02a" />
            <stop offset=".65" stopColor="#ff4a3d" />
            <stop offset="1" stopColor="#e2107a" />
          </linearGradient>
          <linearGradient id="ffLeft" x1=".3" y1="0" x2=".4" y2="1">
            <stop offset="0" stopColor="#ffae1c" />
            <stop offset=".5" stopColor="#ff6a2c" />
            <stop offset="1" stopColor="#ff3547" />
          </linearGradient>
          <radialGradient id="ffGlobe" cx=".45" cy=".6" r=".65">
            <stop offset="0" stopColor="#5a5fe0" />
            <stop offset=".6" stopColor="#7a3fe0" />
            <stop offset="1" stopColor="#a830d8" />
          </radialGradient>
        </defs>
        <path d="M45 14c2 4 7 8 10 12 3 0 6 7 6 13 0 12-10 21-22.500 21S15.700 50 15.700 38.500C16 32 18 30 19 26l3-4 1 4 3-1 7 2 5-1c-1-5 2-10 7-12z" fill="url(#ffBody)" />
        <circle cx="38" cy="37" r="10.500" fill="url(#ffGlobe)" />
        <path d="M22 21c0 3 1 4 3 5 4-2 9 0 11 3l-1 2c3 0 5 1 5 2-1 3-6 2-8 5-2 4-1 8 4 10 5 1 9-1 12-4-1 8-7 11-14 11-10 0-17-8-17-17 0-6 1-9 2-12l1 2z" fill="url(#ffLeft)" />
        <path d="M29 28c4-1 7 0 8 3l2 2c-1 3-5 2-7 5-3 0-9-5-8-7z" fill="#ff9a1f" />
      </DockItem>
      <DockItem dots={3}>
        <path d="M17.500 19.500a1.500 1.500 0 0 1 1.500-1.500h14l4.500 4H57a1.500 1.500 0 0 1 1.500 1.500V40h-41z" fill="#48b9c7" />
        <rect x="17" y="26" width="42" height="34" rx="3" fill="#636363" />
        <rect x="17" y="24.500" width="42" height="33" rx="3" fill="#adadad" />
        <rect x="30.500" y="31.500" width="15.500" height="6" rx="1" fill="#939393" />
        <rect x="31" y="32" width="14.500" height="3.500" fill="#fff" />
      </DockItem>
      <DockItem dots={1}>
        <rect x="17" y="28" width="42" height="29" rx="2" fill="#6e6e6e" />
        <rect x="17" y="25" width="42" height="29" rx="2" fill="#cfcfcf" />
        <rect x="19.200" y="27.200" width="37.600" height="24.600" fill="#3c3c3c" />
        <text x="24.500" y="38.500" fill="#fff" fontSize="10" fontWeight="700" fontFamily="'DejaVu Sans Mono'">
          $_
        </text>
      </DockItem>
      <DockItem dots={0}>
        <rect x="18" y="22" width="40" height="36.500" rx="2" fill="#ffb06a" />
        <path d="M27 40h31v12H27z" fill="#fccb6a" />
        <path d="M27 52h31v4.500a2 2 0 0 1-2 2H27z" fill="#574843" />
        <path d="M20 22h7v36.500h-7a2 2 0 0 1-2-2V24a2 2 0 0 1 2-2z" fill="#a39a95" />
        <g fill="#6b625e">
          <circle cx="22.500" cy="26.500" r="1.700" />
          <circle cx="22.500" cy="32.500" r="1.700" />
          <circle cx="22.500" cy="38.500" r="1.700" />
          <circle cx="22.500" cy="44.500" r="1.700" />
          <circle cx="22.500" cy="50.500" r="1.700" />
          <path d="M22 31.500h17v2H22z" />
        </g>
        <path d="M38.500 40c-4 3-6.500 8-7.500 15l6-4.500h11l6 4.500c-1-7-3.500-12-7.500-15z" fill="#e6e6e6" />
        <path d="M42.500 16.500c3 4 4.500 12 4.500 20l-1 16h-7l-1-16c0-8 1.500-16 4.500-20z" fill="#fff" />
        <path d="M40.500 22h4.500v2.500h-4.500z" fill="#35b8c4" />
        <path d="M40 40.500h5.500v2H40z" fill="#f2c14e" />
      </DockItem>
      <DockItem dots={0}>
        <rect x="18" y="20" width="40" height="37" rx="2" fill="#6e6e6e" />
        <rect x="18" y="18" width="40" height="37" rx="2" fill="#cdcdcd" />
        <g fill="#423c39">
          <circle cx="38" cy="37" r="9" />
          {[0, 60, 120].map((a) => (
            <rect key={a} x="34.800" y="25" width="6.400" height="24" rx="1" transform={`rotate(${a} 38 37)`} />
          ))}
        </g>
        <circle cx="38" cy="37" r="3.600" fill="#cdcdcd" />
      </DockItem>
      <DockItem dots={1}>
        <path d="M17.500 31l3-3a1.500 1.500 0 0 1 2 0L49 50v8.500L18 33z" fill="#0b74bd" />
        <path d="M17.500 46l3 3a1.500 1.500 0 0 0 2 0L49 26v-8.500L18 44z" fill="#0f80cc" />
        <path d="M48 17l9 4.500a2.500 2.500 0 0 1 1.500 2.200v29a2.500 2.500 0 0 1-1.500 2.200L48 59.200c-1 .2-2 0-2-.7 1.500.5 2.500 0 2.500-1.500V19.500c0-1.500-1-2-2.500-1.500 0-.8 1-1.200 2-1z" fill="#25a3f2" />
      </DockItem>
      <div className="mx-[4px] mt-[14px] h-12 w-px bg-[#242120]" />
      <DockItem dots={3}>
        <path d="M22 18a1.500 1.500 0 0 1 1.500-1.500H43L55 29v30a1.500 1.500 0 0 1-1.500 1.500h-30A1.500 1.500 0 0 1 22 59z" fill="#ececec" />
        <path d="M22 58.500h33v.8a1.500 1.500 0 0 1-1.500 1.500h-30A1.500 1.500 0 0 1 22 59.300z" fill="#a9a9a9" />
        <path d="M42.500 16.500L55 29H44a1.500 1.500 0 0 1-1.500-1.500z" fill="#fff" stroke="#cfcfcf" strokeWidth=".6" />
        <path d="M27 37h23M27 43h20M27 49h14M27 55h9" stroke="#7d7d7d" strokeWidth="1.800" />
        <path d="M57 33l5.500 4.500L41 57.500l-6.500 2.500 1.500-6.500z" fill="#f0b429" />
        <path d="M57 33l2.500 2-21 20.500-2.500-2z" fill="#ffd45c" />
        <path d="M57 33l1.500-1.300a1.500 1.500 0 0 1 2 0L63 34.500a1.500 1.500 0 0 1 0 2L61.500 38z" fill="#ef7d6c" />
        <path d="M55 35l1.500-1.500 5 4.500-1.500 1.500z" fill="#d7d7d7" />
      </DockItem>
    </div>
  );
}

export default function App() {
  return (
    <div className="flex h-[1200px] w-[1920px] flex-col overflow-hidden bg-white [font-family:'Source_Sans_3','Noto_Sans_CJK_SC',sans-serif]">
      <TopBar />
      <TabBar />
      <NavBar />
      <div className="flex min-h-0 flex-1 pt-[1px]">
        <Rail />
        <RunsPanel />
        <Main />
      </div>
      <Dock />
    </div>
  );
}
